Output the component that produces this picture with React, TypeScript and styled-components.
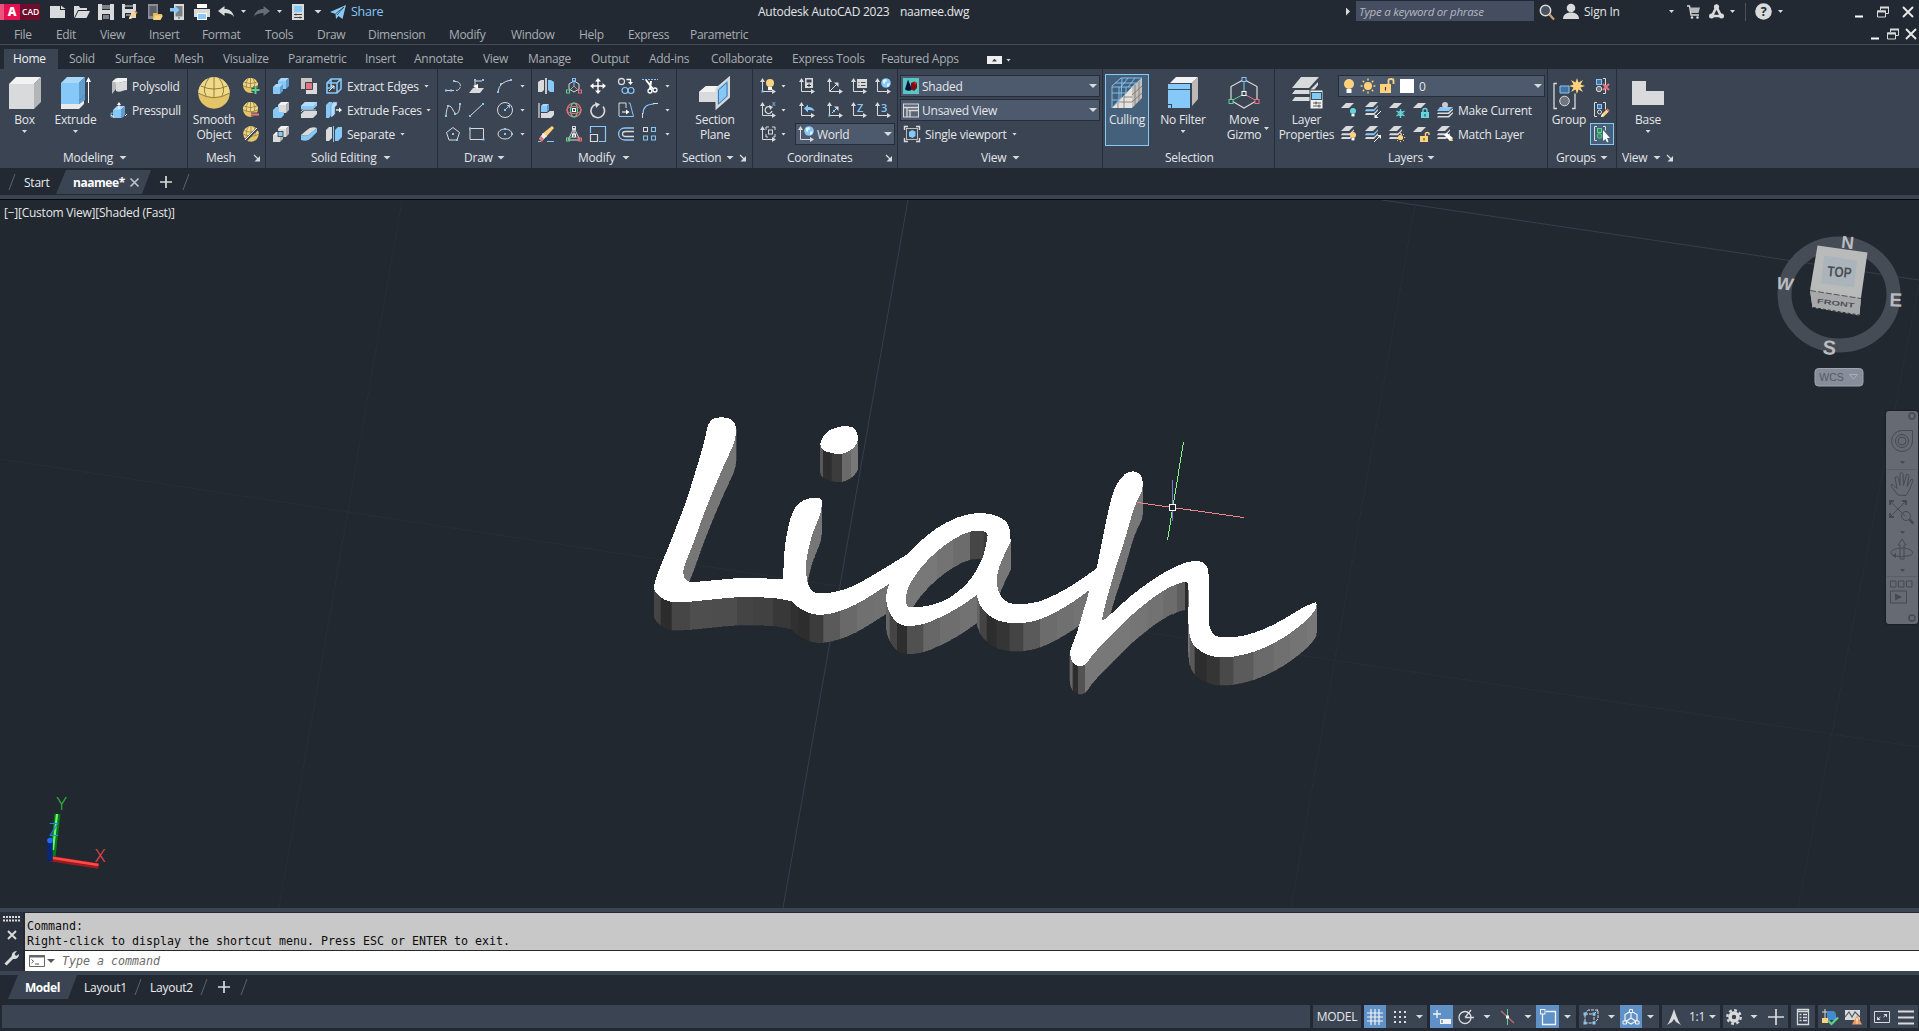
import React from 'react';
import styled, { createGlobalStyle } from 'styled-components';

const C = {
  dark: '#222932',
  view: '#212830',
  panel: '#3b4453',
  field: '#4d596c',
  edge: '#262d38',
  text: '#e4e6e9',
  dim: '#a9adb4',
  g: '#d9dadb',
  b: '#86c8f8',
  y: '#ffd27d',
  red: '#e8737a',
  green: '#5fd08e',
  teal: '#63d5dc',
  hot: '#5f90c6',
};

const Global = createGlobalStyle`
  * { box-sizing: border-box; }
  body { margin: 0; background: ${C.dark}; overflow: hidden; }
`;

const App_ = styled.div`
  width: 1919px;
  height: 1031px;
  display: flex;
  flex-direction: column;
  background: ${C.dark};
  color: ${C.text};
  font: 12px/15px 'Open Sans', 'Noto Sans', sans-serif;
  letter-spacing: -0.24px;
`;

const Svg = styled.svg<{ $s?: number; $h?: number }>`
  display: block;
  flex: none;
  width: ${(p) => p.$s ?? 16}px;
  height: ${(p) => p.$h ?? p.$s ?? 16}px;
  fill: none;
  overflow: visible;
`;

const Label = styled.span<{ $w?: number }>`
  display: block;
  flex: none;
  width: ${(p) => (p.$w ? `${p.$w}px` : 'auto')};
  white-space: nowrap;
`;

const Caret = styled.i<{ $s?: number; $ml?: number }>`
  display: block;
  flex: none;
  width: ${(p) => p.$s ?? 5}px;
  height: ${(p) => ((p.$s ?? 5) > 5 ? 4 : 3)}px;
  margin-left: ${(p) => p.$ml ?? 0}px;
  background: ${C.g};
  clip-path: polygon(0 0, 100% 0, 50% 100%);
`;

const Gap = styled.span<{ $w: number }>`
  flex: none;
  width: ${(p) => p.$w}px;
`;

/* ---------- icons ---------- */
const Ico = ({ s = 16, h, children }: { s?: number; h?: number; children: React.ReactNode }) => (
  <Svg $s={s} $h={h} viewBox={`0 0 ${s} ${h ?? s}`}>
    {children}
  </Svg>
);

const Cube = ({ x = 0, y = 0, w = 16, k = 4, front = C.g, top = '#f2f2f2', side = '#b4b5b7' }) => (
  <g>
    <path d={`M${x} ${y + k}h${w - k}v${w - k}h${k - w}z`} fill={front} />
    <path d={`M${x} ${y + k}l${k} ${-k}h${w - k}l${-k} ${k}z`} fill={top} />
    <path d={`M${x + w - k} ${y + k}l${k} ${-k}v${w - k}l${-k} ${k}z`} fill={side} />
  </g>
);
const Blue = (p: { x?: number; y?: number; w?: number; k?: number }) => (
  <Cube {...p} front={C.b} top="#a9d8fb" side="#5f9fd0" />
);

const Ball = ({ r = 8, cx = 8, cy = 8 }) => (
  <g>
    <circle cx={cx} cy={cy} r={r} fill="#e3c567" />
    <path d={`M${cx - r} ${cy}A${r} ${r} 0 0 1 ${cx + r} ${cy}Q${cx} ${cy + r * 0.55} ${cx - r} ${cy}`} fill="#f1d98a" />
    <path
      d={`M${cx - r} ${cy}q${r} ${r * 0.6} ${2 * r} 0M${cx - r * 0.85} ${cy - r * 0.45}q${r * 0.85} ${r * 0.4} ${r * 1.7} 0M${cx} ${cy - r}v${r * 1.25}M${cx - r * 0.3} ${cy - r}q${-r * 0.5} ${r * 0.7} ${-r * 0.2} ${r * 1.2}M${cx + r * 0.3} ${cy - r}q${r * 0.5} ${r * 0.7} ${r * 0.2} ${r * 1.2}`}
      stroke="#8a7434"
      strokeWidth={r > 9 ? 0.9 : 0.7}
    />
  </g>
);

const Sheet = ({ y = 1, x = 0, w = 13, c = C.g }) => (
  <path d={`M${x + 5} ${y}h${w - 5}l-5 5h${5 - w}z`} fill={c} />
);
const Stack = ({ c = C.g }: { c?: string }) => (
  <g>
    <Sheet y={0} />
    <path d="M1 7.2h8l4-4v1.6l-4 4.4H0z" fill={c} />
    <path d="M1 11h8l4-4v1.6l-4 4.4H0z" fill={C.g} />
  </g>
);
const Bulb = ({ x, y, r = 3, c = C.y }: { x: number; y: number; r?: number; c?: string }) => (
  <g>
    <circle cx={x} cy={y} r={r} fill={c} />
    <rect x={x - r / 2} y={y + r} width={r} height={r * 0.8} fill="#fff" />
  </g>
);
const Sun = ({ x, y, r = 3 }: { x: number; y: number; r?: number }) => (
  <g>
    <circle cx={x} cy={y} r={r} fill={C.y} />
    {[0, 45, 90, 135, 180, 225, 270, 315].map((a) => (
      <path key={a} d={`M${x + r * 1.35} ${y}h${r * 0.5}`} transform={`rotate(${a} ${x} ${y})`} stroke={C.y} strokeWidth={r * 0.35} />
    ))}
  </g>
);
const Lock = ({ x, y, c = C.y, open = false }: { x: number; y: number; c?: string; open?: boolean }) => (
  <g transform={`translate(${x} ${y})`}>
    <rect x="0" y="4" width="8" height="6" fill={c} />
    <path d={open ? 'M5.5 4V1.5q0-1 1.8-1t1.7 1V3' : 'M2 4V2q0-1.5 2-1.5T6 2v2'} stroke={c} strokeWidth="1.4" />
    <rect x="3.5" y="6" width="1" height="2.4" fill="#333" />
  </g>
);
const Pencil = ({ x, y }: { x: number; y: number }) => (
  <g transform={`translate(${x} ${y})`}>
    <path d="M0 8l1-3 4.5-4.5 2.2 2.2L3 7.2z" fill={C.y} />
    <path d="M5.5.5l1-1 2.2 2.2-1 1z" fill={C.red} />
    <path d="M0 8l1-3 2 2.2z" fill="#fff" />
  </g>
);
const Globe = ({ x = 11, y = 5 }) => (
  <g>
    <circle cx={x} cy={y} r="4.8" fill={C.b} />
    <path d={`M${x - 3} ${y - 3}l3-1 1 2-2 1v2l-2-1zM${x + 1} ${y + 1}l3-1-1 3-2 1z`} fill="#e6f4ff" />
  </g>
);
const Ucs = ({ children }: { children?: React.ReactNode }) => (
  <Ico>
    <path d="M2.5 2v11.5H14" stroke={C.g} />
    <path d="M0 4l2.5-4L5 4zM12 11l4 2.5-4 2.5z" fill={C.g} />
    {children}
  </Ico>
);

const dot = (x: number, y: number, c = C.b) => <rect key={`${x}-${y}`} x={x - 1} y={y - 1} width="2" height="2" fill={c} />;
const box = (x: number, y: number, w: number, c: string, f = 'none') => <rect x={x} y={y} width={w} height={w} stroke={c} fill={f} />;

const I = {
  fresh: <Ico><path d="M0 2h10v4h5v8H0z" fill={C.g} /><path d="M11 1.500l4.500 3.500H11z" fill={C.g} /></Ico>,
  open: <Ico><path d="M0 2h5l1 2h7v2H4L1 12 0 14z" fill={C.g} /><path d="M4.500 7H16l-3.500 7H1z" fill={C.g} /></Ico>,
  save: <Ico><path d="M0 0h16v16H0z" fill={C.g} /><path d="M4 0h8v6H4zM4 10h8v6H4z" fill={C.dark} /><path d="M4 2h8M4 4h8M5 12h6M5 14h6" stroke={C.g} strokeWidth="1.200" /></Ico>,
  saveAs: <Ico><path d="M0 0h14v14H0z" fill={C.g} /><path d="M3 0h8v5H3zM3 9h6v5H3z" fill={C.dark} /><path d="M3 2h8M4 11h5" stroke={C.g} /><Pencil x={7} y={7} /></Ico>,
  mobOpen: <Ico><path d="M1 0h10v15H1z" fill="#8b8f95" /><path d="M2.500 2h7v10h-7z" fill="#5a5f68" /><path d="M6 9h4l1 1h4v2h-6l-3 4z" fill="#e9b65c" /><path d="M8 11.500h8L13.500 16H6z" fill={C.y} /></Ico>,
  mobSave: <Ico><path d="M4 0h10v16H4z" fill={C.g} /><path d="M5.500 2h7v10.500h-7z" fill="#7b8087" /><path d="M0 4h5V1.500L9.500 6 5 10V7.500H0z" fill={C.b} /><path d="M8 14h2" stroke="#555" /></Ico>,
  print: <Ico><path d="M3 0h10v4H3z" fill="#fff" /><path d="M0 5h16v8H0z" fill={C.g} /><path d="M3 9h10v7H3z" fill="#fff" /><path d="M4 10h8v5H4z" fill={C.b} /></Ico>,
  undo: <Ico><path d="M0 7l6.500-5v3c5 0 8.500 2.500 9.500 8-2-3-5-4-9.500-4v3z" fill={C.g} /></Ico>,
  redo: <Ico><path d="M16 7L9.500 2v3C4.500 5 1 7.500 0 13c2-3 5-4 9.500-4v3z" fill="#676d76" /></Ico>,
  sheet: <Ico><path d="M2 0h12v16H2z" fill={C.g} /><path d="M4 2h8v6H4z" fill={C.b} /><path d="M4 10.500h8M4 13.500h8" stroke="#444" /><path d="M6 9.500v2M10 12.500v2" stroke="#444" /></Ico>,
  plane: <Ico><path d="M0 8L16 1l-3.500 14-4-3L6 15l-.5-5zM6 10l8-7-6.500 8" fill={C.b} /><path d="M5.500 9.800L14 3 7 11" stroke={C.dark} strokeWidth=".7" /></Ico>,
  search: <Ico><circle cx="6.500" cy="6.500" r="5.200" fill="#4a525e" stroke={C.g} strokeWidth="1.500" /><path d="M10.500 10.500l4.500 5" stroke="#c9a46a" strokeWidth="2.200" /></Ico>,
  user: <Ico><circle cx="8" cy="4" r="4.300" fill={C.g} /><path d="M0 15c0-4 3-6.500 8-6.500s8 2.500 8 6.500z" fill={C.g} /></Ico>,
  cart: <Ico s={13} h={14}><path d="M0 1h2.500L4 10h8" stroke={C.g} strokeWidth="1.400" /><path d="M3 2.500h10L11.500 8H4z" fill="#b5b7ba" /><circle cx="5" cy="12.500" r="1.300" fill={C.g} /><circle cx="10.500" cy="12.500" r="1.300" fill={C.g} /></Ico>,
  tri: <Ico s={15}><path d="M7.500 3L3 12h9z" stroke={C.g} strokeWidth="2.600" /><circle cx="7.500" cy="2.800" r="2.600" fill={C.g} /><circle cx="2.500" cy="12" r="2.500" fill={C.g} /><circle cx="12.500" cy="12" r="2.500" fill={C.g} /></Ico>,
  help: <Ico s={17}><circle cx="8.500" cy="8.500" r="8.300" fill={C.g} /><text x="8.500" y="13" textAnchor="middle" fontSize="12.500" fontWeight="700" fill={C.dark}>?</text></Ico>,
  min: <Ico s={12}><path d="M2 10.500h8" stroke="#fff" strokeWidth="2" /></Ico>,
  rest: <Ico s={12}><path d="M3.500 4V1.500h8v6H9" stroke={C.g} /><path d="M3 1.500h9" stroke={C.g} strokeWidth="2" /><path d="M.5 5h8v6h-8z" stroke={C.g} /><path d="M0 5.500h9" stroke={C.g} strokeWidth="2" /></Ico>,
  close: <Ico s={12}><path d="M1 1l10 10M11 1L1 11" stroke="#e8e8e8" strokeWidth="1.900" /></Ico>,

  box: <Ico s={32}><Cube w={32} k={7} /></Ico>,
  extrude: <Ico s={32}><path d="M1 27h18l5-4v4l-5 5H1z" fill="#e9e9e9" /><Blue x={1} w={24} k={6} /><path d="M1 24h18v3H1z" fill={C.b} /><path d="M19 24l6-6v5l-6 4z" fill="#5f9fd0" /><path d="M28.500 26V3" stroke="#fff" /><path d="M26 5l2.500-5L31 5z" fill="#fff" /></Ico>,
  polysolid: <Ico><path d="M1 4l4-4v11l-4 5z" fill="#b8b9bb" /><path d="M5 4c4 2 6-1 11-1v9c-4 0-7 3-11 1z" fill={C.g} /><path d="M1 3.500L6 0h10v3C11 3 9 6 5 4.500z" fill="#f2f2f2" /></Ico>,
  presspull: <Ico><path d="M0 11h14l-2 4H0z" stroke={C.b} strokeWidth=".8" /><Blue x={2} y={4} w={12} k={4} /><path d="M8 7V2" stroke="#fff" /><path d="M6 3l2-3 2 3z" fill="#fff" /><path d="M0 13l3 2M16 12l-2 2" stroke="#fff" /></Ico>,
  smooth: <Ico s={32}><Ball r={15.700} cx={16} cy={16} /></Ico>,
  meshMore: <Ico><Ball r={7.500} cx={7.500} cy={7.500} /><path d="M12.500 8v8M8.500 12h8" stroke={C.panel} strokeWidth="4" /><path d="M12.500 8v8M8.500 12h8" stroke={C.green} strokeWidth="2" /></Ico>,
  meshLess: <Ico><Ball r={7.500} cx={7.500} cy={7.500} /><path d="M8 12.500h8" stroke={C.panel} strokeWidth="4" /><path d="M8 12.500h8" stroke={C.red} strokeWidth="2.200" /></Ico>,
  meshRef: <Ico><Ball r={7.700} /><path d="M2 15L15 2" stroke={C.panel} strokeWidth="3" /><path d="M2 14L14 2" stroke="#eee" /></Ico>,

  union: <Ico><Blue x={5} y={0} w={11} k={3} /><Blue x={0} y={6} w={10} k={3} /></Ico>,
  subtract: <Ico><Cube x={5} y={0} w={11} k={3} /><path d="M0 8l3-3h3v5h5v3l-3 3H0z" fill={C.b} /></Ico>,
  intersect: <Ico><Cube x={5} y={0} w={11} k={3} /><Cube x={0} y={6} w={10} k={3} /><rect x="5" y="5.500" width="5" height="5" fill={C.b} stroke="#333" strokeWidth=".8" /></Ico>,
  interfere: <Ico><path d="M0 0h11v11H0z" fill="#c9c5c4" /><path d="M5 5h11v11H5z" fill={C.g} /><path d="M4.500 4.500h7v7h-7z" fill={C.red} stroke={C.panel} /></Ico>,
  slice: <Ico><path d="M0 4l4-4h12v3.500L12 7.500H0z" fill={C.b} /><path d="M0 4l4-4h12l-4 4z" fill="#b5defc" /><path d="M0 12l3-3h13v3l-4 4H0z" fill={C.g} /><path d="M0 10l2-2h13" stroke="#fff" strokeWidth=".7" /></Ico>,
  thicken: <Ico><path d="M0 9l6-5q4-4 10-2l-6 5q-3 4-10 2z" fill={C.g} /><path d="M0 9q7 2 10-2l6-5v4l-6 6Q7 16 0 14z" fill={C.b} /></Ico>,
  xEdges: <Ico><path d="M1 5l4-4h10v10l-4 4H1zM1 5h10v10M11 5l4-4M5 1v9H1" stroke={C.b} strokeWidth="1.600" /><path d="M3 13l5-5M5 8h3v3" stroke="#fff" /></Ico>,
  xFaces: <Ico><path d="M0 3l3-3h3v12l-3 4H0z" fill={C.b} /><path d="M5 3l2-3h4v3L9 5v7l-3 3H5z" fill="#b5defc" stroke="#55799b" strokeWidth=".5" /><path d="M10 8h4" stroke="#fff" strokeWidth="1.300" /><path d="M13 5.500L16 8l-3 2.500z" fill="#fff" /></Ico>,
  separate: <Ico><path d="M0 4l3-3h3v11l-3 3H0z" fill={C.g} /><path d="M7.500 0v16" stroke={C.b} /><path d="M9 4l3-3h4v10l-4 4H9z" fill={C.b} /></Ico>,

  pline: <Ico><path d="M1 12.500h9M10 3.500c8 0 6 9 1 9" stroke={C.g} strokeDasharray="8 1" />{dot(1, 12.500)}{dot(6, 12.500)}{dot(9, 3)}</Ico>,
  helix: <Ico><path d="M0 15l4-5h11l-4 5z" fill={C.g} /><path d="M6 12V3h7" stroke={C.g} /><path d="M4 8l5-2v5z" fill="#fff" />{dot(6, 2)}{dot(14, 2)}</Ico>,
  arc: <Ico><path d="M1 14Q2 4 14 2" stroke={C.g} />{dot(1, 14)}{dot(4, 6)}{dot(14, 2)}</Ico>,
  spline: <Ico><path d="M1 13C2 2 5 2 8 8s6 5 7-5" stroke={C.g} />{dot(1, 14)}{dot(3, 4)}{dot(10, 12)}{dot(15, 2)}</Ico>,
  line: <Ico><path d="M1 14L14 2" stroke={C.g} />{dot(1, 14)}{dot(14, 2)}</Ico>,
  circle: <Ico><circle cx="8" cy="8" r="7.500" stroke={C.g} /><path d="M8 8l4-4" stroke={C.b} /><path d="M9.500 3H13v3.500z" fill={C.b} />{dot(8, 8)}</Ico>,
  polygon: <Ico><path d="M8 1.500l6.500 5L12 14H4L1.500 6.500z" stroke={C.g} />{dot(8, 8)}{dot(12, 14)}</Ico>,
  rect: <Ico><path d="M1 2.500h13.500v11H1z" stroke={C.g} />{dot(1, 2.500)}{dot(14.500, 13.500)}</Ico>,
  ellipse: <Ico><ellipse cx="8" cy="8" rx="7" ry="5" stroke={C.g} />{dot(8, 8)}{dot(8, 3)}{dot(15, 8)}</Ico>,

  mirror3: <Ico><path d="M0 4l3-2h3v10l-2 2H0z" fill={C.g} /><path d="M8 0v16" stroke="#fff" strokeWidth="1.400" /><path d="M10 2h3l3 2v10h-4l-2-2z" fill={C.b} /></Ico>,
  gizMove: <Ico><path d="M8 3l5 3v5l-5 3-5-3V6z" stroke={C.g} /><path d="M8 8V2" stroke={C.b} /><path d="M8 8l-5 5" stroke={C.green} /><path d="M8 8l5 5" stroke={C.red} />{box(6.500, .5, 3, C.b)}{box(.5, 12, 3, C.green)}{box(12.500, 12, 3, C.red)}</Ico>,
  move: <Ico><path d="M8 2v12M2 8h12" stroke="#fff" strokeWidth="1.400" /><path d="M5 3.500L8 0l3 3.500zM5 12.500L8 16l3-3.500zM3.500 5L0 8l3.500 3zM12.500 5L16 8l-3.500 3z" fill="#fff" /></Ico>,
  copy: <Ico><circle cx="3.500" cy="3.500" r="3" stroke={C.g} strokeWidth="1.300" /><circle cx="7" cy="12.500" r="3" stroke={C.b} strokeWidth="1.200" /><circle cx="13" cy="12.500" r="3" stroke={C.b} strokeWidth="1.200" /><path d="M8.500 1.500h4V5" stroke="#fff" strokeWidth="1.300" /><path d="M10 4h5l-2.500 3z" fill="#fff" /></Ico>,
  trim: <Ico><path d="M0 1.500h16" stroke={C.b} strokeDasharray="2 1" /><path d="M4 2l7 9M9 3L8 11" stroke="#fff" strokeWidth="2" /><circle cx="8" cy="13" r="2" stroke="#fff" strokeWidth="1.300" /><circle cx="13" cy="12" r="2" stroke="#fff" strokeWidth="1.300" /></Ico>,
  align3: <Ico><path d="M1 1v15" stroke="#fff" /><Blue x={3} y={2} w={8} k={2} /><path d="M3 11h6l3-2h4v4l-3 3H3z" fill={C.g} /></Ico>,
  gizRot: <Ico><circle cx="8" cy="8" r="7" stroke={C.red} strokeWidth="1.200" /><ellipse cx="8" cy="8" rx="3.500" ry="7" stroke={C.green} strokeWidth="1.200" /><ellipse cx="8" cy="8" rx="7" ry="3.500" stroke={C.red} /><rect x="6.500" y="6.500" width="3" height="3" stroke="#fff" /></Ico>,
  rotate: <Ico><path d="M13 4.500A6.800 6.800 0 1 1 6 2.300" stroke={C.g} strokeWidth="1.600" /><path d="M5 0l5 2.300L6 6z" fill={C.g} /></Ico>,
  stretch: <Ico><path d="M1 14V1h7v5" stroke={C.g} /><path d="M1 14.500h14.500L12 1h-1.500" stroke={C.b} /><path d="M4 10h6" stroke="#fff" /><path d="M8 7.500l3.500 2.500L8 12.500z" fill="#fff" /></Ico>,
  fillet: <Ico><path d="M1 12Q1 2 12 2" stroke={C.b} strokeWidth="1.200" /><path d="M.5 11v5M11 1.500h5" stroke={C.g} /></Ico>,
  erase: <Ico><path d="M14 0l2 2-8 9-4-3z" fill={C.y} /><path d="M5 7l4 3-4 4-4-1z" fill="#f0f0f0" /><path d="M3 10l3 3-2 3-3-3z" fill={C.red} /><path d="M0 15.500h3M9 15.500h7" stroke={C.b} /></Ico>,
  gizScale: <Ico><path d="M8 2L2 14h12z" stroke={C.g} /><path d="M8 10V2" stroke="#fff" /><path d="M8 9l-6 5" stroke={C.green} /><path d="M8 9l6 5" stroke={C.red} />{box(6.500, .5, 3, C.g)}{box(.5, 12, 3, C.green)}{box(12.500, 12, 3, C.red)}{box(6.500, 8, 3, '#fff')}</Ico>,
  scale: <Ico><path d="M.5 7V.5h15v15H9" stroke={C.b} strokeWidth="1.200" /><path d="M.5 8.500h7v7h-7z" stroke={C.g} strokeWidth="1.200" /></Ico>,
  offset: <Ico><path d="M16 2H7C-1.500 2-1.500 14 7 14h9" stroke={C.b} strokeWidth="1.300" /><path d="M16 5.500H7.500c-4 0-4 5 0 5H16" stroke={C.g} strokeWidth="1.300" /></Ico>,
  array: <Ico>{box(1.500, 1.500, 4, C.g)}{box(9.500, 1.500, 4, C.b)}{box(1.500, 10, 4, C.b)}{box(9.500, 10, 4, C.b)}</Ico>,

  section: <Ico s={32}><path d="M0 15l7-6h13v15l-3 1H0z" fill={C.g} /><path d="M0 15l7-6h13l-4 6z" fill="#f2f2f2" /><path d="M17.500 11.500L30 1v19L17.500 31z" fill={C.b} stroke={C.g} strokeWidth="2" /><path d="M19.500 13L28 5.500V19l-8.500 8z" stroke="#44617d" strokeWidth=".8" /></Ico>,

  ucsLight: <Ucs><Bulb x={10} y={5} r={4} />{dot(2.500, 13.500)}</Ucs>,
  ucsRot: <Ucs><path d="M11 5.500A3.500 3.500 0 1 0 12 9" stroke={C.g} strokeWidth="1.200" /><path d="M9 3l4 2-3 3z" fill={C.g} /><text x="12" y="4" fontSize="7" fill={C.b}>x</text></Ucs>,
  ucsObj: <Ucs><path d="M6 4V1h3M12 1h3v3M6 8v3h2M15 8v3h-2" stroke={C.g} />{box(8.500, 4, 4, C.g)}</Ucs>,
  ucs1: <Ucs><path d="M6 0h8v10H6z" fill={C.g} /><path d="M7.500 1.500h5v3h-5z" fill={C.panel} /><path d="M8 7.500h4M10 5.500v3.500" stroke="#333" /></Ucs>,
  ucs2: <Ucs><path d="M3 13l7-7" stroke={C.g} /><path d="M7 4.500h4.500V9z" fill={C.g} /></Ucs>,
  ucs3: <Ucs><path d="M6 1h10v9H6z" fill={C.g} /><path d="M7.500 4.500h1M10 4.500h4.500M7.500 7.500h1M10 7.500h4.500" stroke="#444" /></Ucs>,
  ucs4: <Ucs><Globe /></Ucs>,
  ucs5: <Ucs><path d="M5 6.500l4-4v2.500c4 0 5 1 6.500 4C13 8 12 8 9 8v2.500z" fill={C.b} /></Ucs>,
  ucs6: <Ucs><path d="M5 11l5-5" stroke={C.g} /><path d="M7 4.500h4.500V9z" fill={C.g} />{dot(2.500, 13.500)}{dot(7, 9)}</Ucs>,
  ucs7: <Ucs><text x="6" y="10" fontSize="11" fontWeight="600" fill={C.b}>Z</text></Ucs>,
  ucs8: <Ucs><text x="6" y="10" fontSize="11" fontWeight="600" fill={C.b}>3</text></Ucs>,

  shaded: <Ico><rect width="16" height="16" fill="#58c6c4" /><path d="M5 1.500l4 10q-3 2.500-7 0z" fill="#0b1038" /><path d="M8 5l3.500-1.500L14 5v5l-3 3-3-2z" fill="#7d0d12" /><path d="M11 3.500l3 1.500-2 2z" fill="#e02a2a" /></Ico>,
  unsaved: <Ico><rect x=".5" y="2" width="15" height="13" stroke={C.g} fill="#5c6575" /><path d="M.5 5.500h15M5.500 8.500H16M4 5.500V15M7 9v6" stroke={C.g} strokeWidth="1.300" /></Ico>,
  single: <Ico><path d="M.5 4V.5H4M12 .5h3.500V4M15.500 12v3.500H12M4 15.500H.5V12" stroke={C.g} strokeWidth="1.400" /><rect x="2.500" y="2.500" width="11" height="11" stroke={C.g} strokeWidth=".8" /><path d="M5 6l3-2 3.500 1.500v4.500L8.500 12 5 10.500z" fill={C.b} /></Ico>,

  culling: <Ico s={32}><path d="M1 31l20-21v21z" fill="#e6e3df" /><path d="M21 10L31 1v20L21 31z" fill="#c4c0bc" /><path d="M13 18v13M7 24v7M13 20h8M8 25h13M24 8v20M28 4v21M21 18l10-9M21 25l10-9" stroke="#75716e" strokeWidth=".8" /><path d="M1 31V9l9-8h21L21 10H1M11 1l-1 20M1 16h15M1 23h8M8 10v14M15 10v7M4 6h21M10 10l7-9M17 10l7-9M1 31l9-10" stroke={C.b} strokeWidth=".9" /></Ico>,
  nofilter: <Ico s={32}><path d="M3 6l6-6h22l-6 6z" fill="#f2f2f2" /><path d="M25 6l6-6v22l-6 7z" fill="#bcbab7" /><path d="M1 7h22v5H1zM1 13h22v18H1z" fill={C.b} /><path d="M1 12.500h22" stroke="#34506b" /><rect x=".5" y="27.500" width="4" height="4" fill={C.b} stroke={C.panel} /></Ico>,
  gizmo: <Ico s={32}><path d="M16 2.500L29 9.500v14L16 31 3 23.500v-14z" stroke={C.g} strokeWidth="1.200" /><path d="M16 17V3" stroke={C.b} /><path d="M16 17L3 24" stroke={C.green} /><path d="M16 17l13 7" stroke={C.red} />{box(14, .5, 4, C.b, C.panel)}{box(1, 22.500, 4, C.green, C.panel)}{box(27, 22.500, 4, C.red, C.panel)}{box(14, 14.500, 4, '#fff', C.panel)}</Ico>,
  layers: <Ico s={32}><path d="M10 0h18L18 11H1z" fill={C.g} /><path d="M4 13h15l8-8v3l-7 9H1zM4 20h15v4H1z" fill={C.g} /><rect x="19" y="13" width="13" height="19" fill="#f0f0f0" stroke={C.panel} /><rect x="20.500" y="15.500" width="10" height="7" fill={C.b} stroke="#355" /><path d="M22 26h8M22 29h8M25 24.500v3M28 27.500v3" stroke="#444" strokeWidth=".9" /></Ico>,
  bulb: <Ico><Bulb x={8} y={6} r={5} /></Ico>,
  sun: <Ico><Sun x={8} y={8} r={4} /></Ico>,
  unlock: <Ico><path d="M1 6h11v9H1z" fill={C.y} /><path d="M9.500 6V2.500Q9.500 1 12 1t2.500 1.500V6" stroke={C.y} strokeWidth="1.800" /><path d="M6.500 9v3.500" stroke="#444" strokeWidth="1.200" /></Ico>,
  la1: <Ico><Sheet /><Bulb x={12} y={9} c={C.teal} /></Ico>,
  la2: <Ico><Stack c={C.b} /><path d="M16 9l-5 5" stroke="#fff" /><path d="M9.500 12v4h4z" fill="#fff" /></Ico>,
  la3: <Ico><Sheet /><path d="M11.500 7v9M7.500 9l8 5M15.500 9l-8 5" stroke={C.teal} strokeWidth="1.300" /><circle cx="11.500" cy="11.500" r="2.400" stroke={C.teal} /></Ico>,
  la4: <Ico><Sheet /><Lock x={8} y={6} c={C.teal} /></Ico>,
  la5: <Ico><path d="M3 5h13l-4 4H0z" fill={C.b} /><path d="M1 10.500h10l5-4v1.500l-4 4H0zM1 14h10l5-4v1.500l-4 4H0z" fill={C.g} /><circle cx="8" cy="3" r="3" fill="#c9cacc" /></Ico>,
  lb1: <Ico><Stack /><Bulb x={12} y={9} /></Ico>,
  lb2: <Ico><Stack c={C.b} /><path d="M9 16l5-5" stroke="#fff" /><path d="M12 9h4v4z" fill="#fff" /></Ico>,
  lb3: <Ico><Stack /><Sun x={11.500} y={11.500} r={2.600} /></Ico>,
  lb4: <Ico><Sheet /><Lock x={7} y={6} open /></Ico>,
  lb5: <Ico><Stack /><path d="M7 9l3-2 6 5-3 3z" fill="#fff" /><path d="M12 15l3-3 1 3z" fill={C.y} /></Ico>,

  group: <Ico s={32}><path d="M4 6.500H1v25h3M19 31.500h3v-15" stroke={C.g} strokeWidth="1.300" /><path d="M7 9h9v7H7z" fill="#46739d" stroke={C.b} /><circle cx="11.500" cy="24" r="4.800" fill="#70757e" stroke={C.g} /><path d="M24 1l1.500 4.500L30 3l-2.500 4.500L32 9l-4.500 1.500L30 15l-4.500-2.500L24 17l-1.500-4.500L18 15l2.500-4.500L16 9l4.500-1.500L18 3l4.500 2.500z" fill={C.y} /></Ico>,
  ungroup: <Ico>{box(2.500, 1.500, 5, C.b, '#46739d')}<circle cx="5" cy="11" r="2.700" fill="#70757e" stroke={C.g} /><path d="M9 .5h2.500v15H9" stroke={C.g} /><path d="M9 6l6 6M15 6l-6 6" stroke={C.red} strokeWidth="2" /></Ico>,
  groupEdit: <Ico><path d="M3 .5H.5v14H3M9 .5h2.500v7" stroke={C.g} />{box(3.500, 2.500, 4, C.b, '#46739d')}<circle cx="5.500" cy="10" r="2" stroke={C.g} /><Pencil x={7} y={7} /></Ico>,
  groupSel: <Ico><path d="M3 .5H.5v14H3M9 .5h2.500v4" stroke={C.g} />{box(3.500, 2.500, 4, C.green, '#3b8560')}<circle cx="5.500" cy="10" r="2.300" fill="#3b8560" stroke={C.green} /><path d="M9 4v11l2.500-2 1.500 3.500 1.500-1-1.500-3.500h3z" fill="#fff" /></Ico>,
  base: <Ico s={32}><path d="M0 4h14v10h18v14H0z" fill={C.g} /></Ico>,
  launch: <Ico s={8}><path d="M1 1l5 5" stroke={C.g} strokeWidth="1.200" /><path d="M7 2v5.500H1.500z" fill={C.g} /></Ico>,
  x9: <Ico s={9}><path d="M.5.500l8 8M8.500.500l-8 8" stroke="#bfc3c9" strokeWidth="1.700" /></Ico>,
  plus: <Ico s={12}><path d="M6 0v12M0 6h12" stroke={C.g} strokeWidth="1.700" /></Ico>,
};

/* ---------- title, menu and ribbon tabs ---------- */
const TitleBar = styled.header`
  flex: none;
  height: 23px;
  display: flex;
  align-items: center;
`;
const Quick = styled.div<{ $x: number }>`
  display: flex;
  flex: none;
  width: ${(p) => p.$x}px;
  align-items: center;
`;
const Badge = styled.div`
  display: flex;
  flex: none;
  width: 40px;
  height: 16px;
  margin-right: 10px;
  align-items: center;
  background: linear-gradient(90deg, #e8547f 0 4px, #e51050 4px 20px, #6d0f2c 20px);
  color: #fff;
  font-size: 8.5px;
  font-weight: 600;
  letter-spacing: 0;
  b {
    width: 16px;
    margin-left: 4px;
    margin-right: 2px;
    text-align: center;
    font-size: 12px;
  }
`;
const Share = styled(Label)`
  margin-left: 5px;
  color: ${C.b};
  font-size: 12.5px;
`;
const Search = styled.div`
  flex: none;
  width: 178px;
  height: 20px;
  margin: -2px 5px 0 6px;
  padding: 3px 3px;
  background: #454d60;
  color: #b4b8c0;
  font-style: italic;
  font-size: 11.5px;
`;
const Side = styled.i`
  width: 4px;
  height: 8px;
  flex: none;
  background: ${C.g};
  clip-path: polygon(0 0, 100% 50%, 0 100%);
`;
const Rule = styled.span`
  width: 1px;
  height: 18px;
  background: #4b525d;
`;
const MenuBar = styled.nav`
  flex: none;
  height: 22px;
  display: flex;
  align-items: center;
  gap: 24px;
  padding: 1px 2px 0 14px;
  border-bottom: 1px solid #434b57;
  color: ${C.dim};
  letter-spacing: -0.32px;
`;
const WinKeys = styled.div`
  display: flex;
  flex: 1;
  justify-content: flex-end;
  align-items: center;
  gap: 6px;
`;
const RibbonTabs = styled.nav`
  flex: none;
  height: 24px;
  display: flex;
  align-items: flex-end;
  padding-left: 4px;
  color: ${C.dim};
  letter-spacing: -0.28px;
`;
const RTab = styled.div<{ $w: number; $on?: boolean }>`
  flex: none;
  width: ${(p) => p.$w + 20}px;
  height: 20px;
  padding: 2px 0 0 ${(p) => (p.$on ? 9 : 11)}px;
  white-space: nowrap;
  color: ${(p) => (p.$on ? '#f2f3f4' : C.dim)};
  background: ${(p) => (p.$on ? C.panel : 'transparent')};
`;
const Mini = styled.div`
  align-self: flex-start;
  display: flex;
  justify-content: center;
  align-items: center;
  width: 15px;
  height: 8px;
  margin: 11px 4px 0 21px;
  background: #eee;
  i {
    width: 5px;
    height: 3px;
    background: #444;
    clip-path: polygon(0 100%, 100% 100%, 50% 0);
  }
`;
const TabCaret = styled(Caret)`
  align-self: center;
  margin-top: 6px;
`;

/* ---------- ribbon ---------- */
const Ribbon = styled.section`
  flex: none;
  height: 99px;
  display: flex;
  padding-left: 1px;
  background: ${C.panel};
`;
const PanelBox = styled.div<{ $w: number }>`
  flex: none;
  width: ${(p) => p.$w}px;
  display: flex;
  flex-direction: column;
  border-right: 1px solid ${C.edge};
  &:last-child { border-right: 0; }
`;
const Body = styled.div`
  height: 78px;
  display: flex;
  padding-top: 5px;
`;
const Grid = styled.div<{ $cols: string; $pad?: number }>`
  display: grid;
  width: 100%;
  grid-template-columns: ${(p) => p.$cols};
  grid-auto-rows: 24px;
  align-content: start;
  align-items: center;
  padding-left: ${(p) => p.$pad ?? 0}px;
`;
const PTitle = styled.div<{ $x: number }>`
  display: flex;
  align-items: center;
  height: 21px;
  padding-left: ${(p) => p.$x}px;
`;
const Cmd = styled.div<{ $pad?: number; $gap?: number }>`
  display: flex;
  align-items: center;
  height: 24px;
  gap: ${(p) => p.$gap ?? 5}px;
  padding-left: ${(p) => p.$pad ?? 0}px;
`;
const BigBtn = styled.div<{ $w: number; $on?: boolean }>`
  grid-row: 1 / span 3;
  align-self: start;
  flex: none;
  display: flex;
  flex-direction: column;
  align-items: center;
  width: ${(p) => p.$w}px;
  height: 72px;
  padding-top: ${(p) => (p.$on ? 2 : 3)}px;
  border: ${(p) => (p.$on ? `1px solid ${C.b}` : 0)};
  background: ${(p) => (p.$on ? '#45607a' : 'transparent')};
  text-align: center;
  white-space: pre;
  span { margin-top: 3px; }
  i { margin-top: 3px; }
`;
const Combo = styled.div<{ $w: number; $ml?: number }>`
  flex: none;
  width: ${(p) => p.$w}px;
  height: 22px;
  margin: 1px 0 1px ${(p) => p.$ml ?? 0}px;
  display: flex;
  align-items: center;
  gap: 3px;
  padding: 0 2px;
  border: 1px solid ${C.edge};
  background: ${C.field};
  > i { margin-left: auto; }
`;
const Stackd = styled.div<{ $pad?: number }>`
  display: flex;
  flex-direction: column;
  padding-left: ${(p) => p.$pad ?? 0}px;
`;
const Swatch = styled.span`
  width: 14px;
  height: 14px;
  margin: 0 2px;
  background: #fff;
`;
const GizCaret = styled.div`
  padding-top: 53px;
  margin-left: -4px;
`;
const Toggle = styled.div<{ $on?: boolean }>`
  display: flex;
  align-items: center;
  justify-content: center;
  width: 24px;
  height: 22px;
  border: ${(p) => (p.$on ? `1px solid ${C.b}` : 0)};
  background: ${(p) => (p.$on ? '#45607a' : 'transparent')};
`;
const WideCell = styled.div`
  grid-column: 2 / span 4;
`;

const Big = ({ w, icon, label, drop, on }: { w: number; icon: React.ReactNode; label: string; drop?: boolean; on?: boolean }) => (
  <BigBtn $w={w} $on={on}>
    {icon}
    <span>{label}</span>
    {drop && <Caret />}
  </BigBtn>
);
const Panel = ({ w, x, title, tw, drop = true, launch, children }: { w: number; x: number; title: string; tw: number; drop?: boolean; launch?: number; children: React.ReactNode }) => (
  <PanelBox $w={w}>
    <Body>{children}</Body>
    <PTitle $x={x}>
      <Label $w={tw}>{title}</Label>
      {drop && <Caret $s={8} $ml={6} />}
      {launch !== undefined && <><Gap $w={launch} />{I.launch}</>}
    </PTitle>
  </PanelBox>
);
const Drop = ({ icon, label, w, ml = 2 }: { icon: React.ReactNode; label?: string; w?: number; ml?: number }) => (
  <Cmd>
    {icon}
    {label && <Label $w={w}>{label}</Label>}
    <Caret $ml={ml} />
  </Cmd>
);

/* ---------- document tabs ---------- */
const DocTabs = styled.nav<{ $h: number; $top: number; $x: number }>`
  flex: none;
  height: ${(p) => p.$h}px;
  padding: ${(p) => p.$top}px 0 0 ${(p) => p.$x}px;
  display: flex;
  align-items: flex-start;
  color: #eceef0;
  > * { height: 24px; display: flex; align-items: center; }
`;
const SlashBox = styled.span`
  width: 8px;
  flex: none;
`;
const Slash = () => (
  <SlashBox><Ico s={8} h={16}><path d="M1 16L7 0" stroke="#5b626d" /></Ico></SlashBox>
);
const OnTab = styled.div<{ $w: number; $pad: number }>`
  flex: none;
  width: ${(p) => p.$w}px;
  padding-left: ${(p) => p.$pad}px;
  gap: 9px;
  background: ${C.panel};
  clip-path: polygon(10px 0, 100% 0, calc(100% - 9px) 100%, 0 100%);
  color: #fff;
  font-weight: 700;
  letter-spacing: -0.45px;
`;
const Strip = styled.div<{ $black?: boolean }>`
  flex: none;
  height: ${(p) => (p.$black ? 5 : 4)}px;
  background: ${C.panel};
  border-bottom: ${(p) => (p.$black ? '1px solid #05070a' : 0)};
`;

/* ---------- viewport ---------- */
const Viewport = styled.main`
  position: relative;
  flex: none;
  height: 708px;
  background: ${C.view};
  overflow: hidden;
`;
const Scene = styled.svg`
  display: block;
  width: 1919px;
  height: 708px;
`;
const ViewLabel = styled.div`
  position: absolute;
  left: 4px;
  top: 5px;
  color: #e6e6e6;
  white-space: nowrap;
`;
const NavBar = styled.div`
  position: absolute;
  left: 1886px;
  top: 211px;
  width: 32px;
  height: 213px;
  border-radius: 3px;
  background: #666a72;
  box-shadow: 0 0 2px #111;
`;

type Pt = [number, number];
const outline: Pt[][] = [
  [[280, 82], [303, 88], [316, 105], [318, 130], [310, 165], [290, 208], [268, 258], [240, 325], [215, 390], [190, 460], [170, 510], [160, 543], [165, 566], [182, 577]],
  [[182, 577], [250, 571], [330, 564], [400, 565], [460, 568]],
  [[460, 568], [461, 520], [466, 460], [475, 410], [488, 367], [505, 342], [530, 327], [568, 323], [576, 335]],
  [[576, 335], [572, 368], [560, 400], [545, 440], [533, 490], [528, 530], [532, 575], [542, 598], [556, 609]],
  [[556, 609], [600, 608], [650, 596], [700, 572], [750, 543], [800, 512], [835, 490], [870, 455], [920, 415], [980, 383], [1035, 370], [1065, 370], [1095, 376], [1122, 390], [1138, 412], [1142, 455]],
  [[1142, 455], [1125, 490], [1110, 525], [1102, 555], [1102, 590], [1113, 618], [1135, 638], [1175, 642], [1225, 635], [1280, 612], [1340, 577], [1400, 535]],
  [[1400, 535], [1406, 505], [1415, 460], [1427, 400], [1438, 350], [1448, 313], [1462, 280], [1484, 253], [1510, 244], [1530, 253], [1538, 275], [1535, 305], [1519, 338], [1505, 377], [1490, 430], [1474, 482], [1455, 540], [1435, 610], [1418, 675], [1418, 693]],
  [[1418, 693], [1445, 670], [1500, 620], [1560, 575], [1620, 538], [1670, 517], [1705, 513], [1728, 525], [1736, 555], [1736, 620], [1737, 690], [1742, 720], [1758, 738], [1790, 742], [1840, 737], [1900, 718], [1960, 688], [2020, 652], [2058, 636]],
  [[2058, 636], [2058, 655], [2030, 690], [1980, 730], [1930, 760], [1870, 786], [1810, 800], [1770, 802], [1730, 793], [1695, 770], [1680, 740], [1675, 690], [1676, 630], [1675, 580]],
  [[1675, 580], [1665, 576], [1640, 583], [1600, 602], [1550, 638], [1500, 680], [1450, 730], [1410, 770], [1380, 805], [1365, 825], [1345, 828], [1328, 818], [1320, 790], [1325, 770], [1340, 730], [1355, 680], [1370, 630], [1378, 600]],
  [[1378, 600], [1330, 635], [1280, 665], [1230, 688], [1180, 699], [1140, 699], [1100, 690], [1070, 670], [1050, 645], [1040, 615]],
  [[1040, 615], [990, 650], [930, 682], [880, 702], [830, 708], [802, 698], [780, 670], [769, 635], [770, 608], [777, 582]],
  [[777, 582], [730, 612], [680, 642], [630, 663], [580, 674], [540, 670], [505, 652], [483, 633]],
  [[483, 633], [430, 624], [370, 622], [320, 622], [250, 628], [180, 635], [125, 636], [92, 622], [73, 598], [78, 565], [95, 520], [120, 460], [145, 395], [170, 330], [190, 265], [210, 200], [225, 145], [233, 108], [250, 86], [280, 82]],
];
const hole: Pt[][] = [
  [[1073, 436], [1062, 424], [1020, 425], [970, 448], [920, 485], [880, 525], [850, 565], [832, 600], [828, 630], [835, 650], [870, 651], [910, 643], [950, 628], [990, 600], [1025, 563], [1050, 520], [1065, 480], [1073, 436]],
];
const tittle: Pt[][] = [
  [[640, 108], [670, 113], [684, 138], [680, 162], [662, 180], [635, 192], [605, 189], [580, 180], [571, 162], [578, 142], [600, 120], [640, 108]],
];

/* Catmull-Rom between corner points, two steps per control span */
const smooth = (runs: Pt[][]): Pt[] => {
  const out: Pt[] = [];
  for (const run of runs) {
    for (let i = 0; i < run.length - 1; i++) {
      const a = run[Math.max(0, i - 1)], b = run[i], c = run[i + 1], d = run[Math.min(run.length - 1, i + 2)];
      for (const t of [0, 0.5]) {
        const f = (k: 0 | 1) =>
          0.5 * (2 * b[k] + (c[k] - a[k]) * t + (2 * a[k] - 5 * b[k] + 4 * c[k] - d[k]) * t * t + (3 * b[k] - a[k] - 3 * c[k] + d[k]) * t * t * t);
        out.push([f(0), f(1)]);
      }
    }
  }
  return out;
};
const ramp: Pt[] = [[-30, 118], [45, 120], [65, 108], [80, 86], [90, 68], [97, 58], [112, 44], [130, 46], [150, 84], [180, 125], [210, 125]];
const shade = (deg: number) => {
  for (let i = 1; i < ramp.length; i++)
    if (deg <= ramp[i][0]) {
      const [a, va] = ramp[i - 1], [b, vb] = ramp[i];
      return Math.round(va + ((vb - va) * (Math.max(deg, a) - a)) / (b - a));
    }
  return 120;
};
const DEPTH = 84;
const solids = [outline, hole, tittle].map(smooth);
const walls = solids
  .flatMap((pts) =>
    pts.map((p, i) => {
      const q = pts[(i + 1) % pts.length];
      /* both halves of a span share one facet normal */
      const s = pts[i - (i % 2)], e = pts[(i - (i % 2) + 2) % pts.length];
      const v = shade((Math.atan2(s[0] - e[0], e[1] - s[1]) * 180) / Math.PI);
      return { p, q, front: q[0] < p[0], y: Math.max(p[1], q[1]), fill: `rgb(${v},${v},${v})` };
    }),
  )
  .filter((w) => w.front)
  .sort((a, b) => a.y - b.y);
const face = solids.map((pts) => 'M' + pts.map((p) => p.map((n) => n.toFixed(1)).join(' ')).join('L') + 'Z').join('');

const Model = () => (
  <g transform="translate(630 390) scale(.33333)" shapeRendering="crispEdges">
    {walls.map(({ p, q, fill }, i) => (
      <path key={i} d={`M${p[0]} ${p[1]}L${q[0]} ${q[1]}v${DEPTH}L${p[0]} ${p[1] + DEPTH}z`} fill={fill} stroke={fill} strokeWidth="1" />
    ))}
    <path d={face} fill="#fff" fillRule="evenodd" />
  </g>
);

const ViewCube = () => (
  <g fontFamily="Liberation Sans, Arial, sans-serif" fontWeight="700" textAnchor="middle" letterSpacing="0">
    <ellipse cx="1839" cy="294.500" rx="54.500" ry="51" fill="none" stroke="#454c56" strokeWidth="14" />
    <path d="M1817.500 245.500l50 7-6.500 45.500-1.500 17-47-7.500-2.500-17z" fill="#b9bbbb" />
    <path d="M1810 290.500l51 8-2 17-46.500-8z" fill="#a6a8a9" />
    <path d="M1810 290.500l51 8" stroke="#4f5459" strokeDasharray="6 2" />
    <path d="M1813 307.500l46 7.500" stroke="#2b3036" strokeDasharray="3 2" />
    <path d="M1824 255.500l33 5-3 27-33-4z" fill="#abb4ba" />
    <text transform="translate(1839 277) rotate(5) scale(.82 1)" fontSize="14.500" fill="#4a5056">TOP</text>
    <text transform="translate(1835.500 305.500) rotate(7) scale(1.150 .7)" fontSize="9.500" fill="#4c5156">FRONT</text>
    <g fontSize="17.500" fill="#babcbe">
      <text transform="translate(1847 248.500) rotate(6)">N</text>
      <text transform="translate(1783.500 289.500) rotate(6) skewX(-8)">W</text>
      <text transform="translate(1895.500 306.500) rotate(2)" fontSize="19">E</text>
      <text transform="translate(1829 354.500) rotate(4)" fontSize="20">S</text>
    </g>
    <rect x="1815" y="368.500" width="48" height="17.500" rx="3.500" fill="#888d9a" stroke="#a0a4af" />
    <text x="1831.500" y="380.500" fontSize="10.500" fontWeight="400" fill="#545b68">WCS</text>
    <path d="M1849.500 374.500h8l-4 4.500z" stroke="#a8adb8" fill="none" />
  </g>
);

const UcsIcon = () => (
  <g fontFamily="Inter, sans-serif" fontWeight="300" fontSize="17" textAnchor="middle">
    <path d="M52.500 857l5-43" stroke="#0a7a12" strokeWidth="6" />
    <path d="M53 850l4-36" stroke="#6cf46c" strokeWidth="2.200" />
    <path d="M50 858.500l48.500 7.500" stroke="#9c1b1e" strokeWidth="5.500" />
    <path d="M50 857.500l48.500 7.500" stroke="#ff4a4a" strokeWidth="2.500" />
    <path d="M50 861v-21" stroke="#06277a" strokeWidth="5.500" />
    <circle cx="50" cy="840.500" r="2.800" fill="#1f6dff" />
    <text x="61.500" y="810" fill="#2fae3b">Y</text>
    <text x="100" y="861.500" fill="#e0454a">X</text>
    <text x="54" y="836" fill="#1f86e8">Z</text>
  </g>
);

const nav = '#454a53';
const NavIcons = () => (
  <Ico s={32} h={213}>
    <g stroke={nav}>
      <circle cx="26" cy="5" r="3" strokeWidth="1.500" />
      <path d="M16 19.500h10.500V31a10.500 10.500 0 1 1-10.500-11.500z" />
      <circle cx="16" cy="30" r="6.500" /><circle cx="16" cy="30" r="4" />
      <path d="M1 58.500h30M1 165.500h30" stroke="#5a5e66" />
      <path d="M12 84l-7-9q0-2 2-1.500l4 4-2-11q2-2 3 0l2 8v-12q1.500-2 3 0l.5 12 3-11q2-1 2.500 1l-2 11 4-7q2-1 2 1l-4 10-3 5z" />
      <path d="M5 91l14 14M19 91L5 105" />
      <path d="M4 94v-4h4M16 90h4v4M4 102v4h4" strokeWidth="1.800" />
      <circle cx="20" cy="105" r="4.500" /><path d="M23.500 108.500l4 4" strokeWidth="2.500" />
      <path d="M14 148v-14h-2l4-6 4 6h-2v14zM8 145c-7-4 0-8 8-8 10 0 15 6 6 8q-6 1-14 0" />
      <path d="M4.500 170h5.500v6H4.500zM12.500 170H18v6h-5.500zM20.500 170H26v6h-5.500zM4.500 180h16v12h-16z" />
      <circle cx="26" cy="207" r="3" strokeWidth="1.500" />
    </g>
    <path d="M9 182.500l7 3.500-7 3.500zM10 142v5l-4-2.500zM14 50h5l-2.500 3zM14 120h5l-2.500 3zM14 158h5l-2.500 3z" fill={nav} />
  </Ico>
);

/* ---------- command line ---------- */
const CommandArea = styled.section`
  flex: none;
  height: 59px;
  display: flex;
  background: #2b313c;
`;
const CmdTools = styled.div`
  width: 24px;
  display: flex;
  flex-direction: column;
  align-items: center;
  border-right: 1px solid ${C.dark};
  padding-top: 4px;
`;
const CmdMain = styled.div`
  flex: 1;
  padding-left: 1px;
  background: ${C.dark};
  padding-top: 1px;
  color: #0c0c0c;
  font: 11.63px/15px 'DejaVu Sans Mono', monospace;
  letter-spacing: 0;
`;
const History = styled.div`
  height: 37px;
  padding: 6px 2px 0;
  background: #c8c8c8;
  white-space: pre;
`;
const Prompt = styled.div`
  display: flex;
  align-items: center;
  height: 20px;
  margin-top: 1px;
  padding-left: 4px;
  background: #fff;
  color: #6c6c6c;
  font-style: italic;
`;
const DarkCaret = styled(Caret)`
  background: #555;
  margin: 0 7px 0 2px;
`;

/* ---------- status bar ---------- */
const StatusBar = styled.footer`
  flex: none;
  display: flex;
  gap: 3px;
  height: 25px;
  padding: 0 0 2px 2px;
`;
const SGroup = styled.div<{ $w: number }>`
  flex: none;
  width: ${(p) => p.$w}px;
  display: flex;
  background: ${C.panel};
`;
const SItem = styled.div<{ $w: number; $on?: boolean }>`
  flex: none;
  width: ${(p) => p.$w}px;
  display: flex;
  align-items: center;
  justify-content: center;
  white-space: nowrap;
  background: ${(p) => (p.$on ? C.hot : 'transparent')};
`;
const w = '#f2f4f6';
const S = {
  grid: <Ico><path d="M4 0v16M8 0v16M12 0v16M0 4h16M0 8h16M0 12h16" stroke={w} strokeWidth="1.200" /></Ico>,
  dots: <Ico>{[3, 8, 13].flatMap((x) => [3, 8, 13].map((y) => dot(x, y, C.g)))}</Ico>,
  dyn: <Ico s={18}><path d="M4 2v8M0 6h8" stroke={w} strokeWidth="1.300" /><path d="M7 11h11v5H7z" fill={w} /><path d="M9 12v3" stroke="#456" /></Ico>,
  polar: <Ico><circle cx="7" cy="8.500" r="6" stroke={C.g} strokeWidth="1.300" /><path d="M7 8.500h9M7 8.500L13 1" stroke={C.g} strokeWidth="1.300" /></Ico>,
  iso: <Ico><path d="M7.500 0v16" stroke={C.green} /><path d="M1 2l13 12" stroke="#c96b72" strokeWidth="1.200" /><rect x="6" y="6.500" width="3" height="3" fill={w} /></Ico>,
  osnap: <Ico><path d="M2.500 5v10.500h13V2.500H6" stroke={w} strokeWidth="1.300" /><rect x=".5" y=".5" width="4.500" height="4.500" stroke={w} fill={C.hot} /></Ico>,
  osnap3: <Ico><path d="M2 5l3-4h10v9l-4 4H2zM2 5h9v9M11 5l4-4" stroke={C.g} strokeDasharray="3 1" />{[[2, 5], [11, 5], [2, 14], [11, 14]].map(([x, y]) => <rect key={`${x}${y}`} x={x - 1.500} y={y - 1.500} width="3" height="3" fill={C.b} />)}</Ico>,
  giz: <Ico><path d="M8 2l6 3.500v6L8 15l-6-3.500v-6zM8 9V2M8 9l-6 4M8 9l6 4" stroke={w} strokeWidth="1.200" /><path d="M6.500.500h3v3h-3zM0 12h3.500v3H0zM12.500 12H16v3h-3.500z" fill={C.hot} stroke={w} /></Ico>,
  anno: <Ico><path d="M8 0l2 6 3 7 2 3-5-3-2-3-2 3-5 3 2-3 3-7z" fill={C.g} /></Ico>,
  gear: <Ico><circle cx="8" cy="8" r="4" stroke={C.g} strokeWidth="3.500" /><circle cx="8" cy="8" r="6.700" stroke={C.g} strokeWidth="2.400" strokeDasharray="2.800 2.460" /></Ico>,
  plus: <Ico><path d="M8 0v16M0 8h16" stroke={C.g} strokeWidth="1.700" /></Ico>,
  list: <Ico><path d="M2.500.500h11v15h-11zM2.500 2.500h11" stroke={C.g} strokeWidth="1.300" /><path d="M4.500 5.500h2M8 5.500h4M4.500 8.500h2M8 8.500h4M4.500 11.500h2M8 11.500h4" stroke={C.g} strokeWidth="1.400" /></Ico>,
  trust: <Ico><path d="M3 0v12M0 3h12" stroke={C.g} /><path d="M5 2h5q4 0 4 4v5H5z" fill="#3f8ccf" /><path d="M0 9h6v5H0z" fill={C.y} /><path d="M6 11.500l3.500 3.500L16 8.500" stroke={C.green} strokeWidth="2.200" /></Ico>,
  perf: <Ico><path d="M0 1h15v10H0z" fill={C.g} /><path d="M0 8l4-5 3 5 3-5 5 5" stroke="#556" strokeWidth="1.200" /><path d="M12 6l5 9.500H7z" fill="#f09a5f" /><path d="M12 9v3.500M12 13.500v1" stroke="#fff" strokeWidth="1.200" /></Ico>,
  full: <Ico><path d="M.5 2.500h15v11H.5z" stroke={C.g} /><path d="M9.500 5h3.500v3.500zM3 7.500L6.500 11H3z" fill={C.g} /><path d="M12 6l-2.500 2M4 10l2.500-2" stroke={C.g} /></Ico>,
  menu: <Ico><path d="M0 2.500h16M0 8.500h16M0 14.500h16" stroke={C.g} strokeWidth="2" /></Ico>,
};

const MENUS: [string, number][] = [['File', 18], ['Edit', 20], ['View', 25], ['Insert', 29], ['Format', 39], ['Tools', 28], ['Draw', 27], ['Dimension', 57], ['Modify', 38], ['Window', 44], ['Help', 25], ['Express', 38], ['Parametric', 57]];
const TABS: [string, number][] = [['Solid', 26], ['Surface', 39], ['Mesh', 29], ['Visualize', 45], ['Parametric', 57], ['Insert', 29], ['Annotate', 49], ['View', 25], ['Manage', 43], ['Output', 38], ['Add-ins', 42], ['Collaborate', 61], ['Express Tools', 69], ['Featured Apps', 76]];

export default function App() {
  return (
    <App_>
      <Global />
      <TitleBar>
        <Quick $x={758}>
          <Badge><b>A</b><span>CAD</span></Badge>
          {I.fresh}<Gap $w={8} />{I.open}<Gap $w={8} />{I.save}<Gap $w={8} />{I.saveAs}<Gap $w={9} />{I.mobOpen}<Gap $w={7} />{I.mobSave}<Gap $w={8} />{I.print}
          <Gap $w={8} />{I.undo}<Caret $ml={7} /><Gap $w={8} />{I.redo}<Caret $ml={7} /><Gap $w={8} />{I.sheet}<Caret $s={8} $ml={8} /><Gap $w={8} />{I.plane}
          <Share>Share</Share>
        </Quick>
        <Label $w={142}>Autodesk AutoCAD 2023</Label>
        <Label $w={446}>naamee.dwg</Label>
        <Side />
        <Search>Type a keyword or phrase</Search>
        {I.search}<Gap $w={8} />{I.user}<Gap $w={5} />
        <Label $w={85}>Sign In</Label>
        <Caret /><Gap $w={13} />{I.cart}<Gap $w={9} />{I.tri}<Caret $ml={6} /><Gap $w={10} /><Rule /><Gap $w={9} />{I.help}<Caret $ml={6} />
        <Gap $w={70} />{I.min}<Gap $w={12} />{I.rest}<Gap $w={13} />{I.close}
      </TitleBar>
      <MenuBar>
        {MENUS.map(([t, n]) => <Label key={t} $w={n}>{t}</Label>)}
        <WinKeys>{I.min}{I.rest}{I.close}</WinKeys>
      </MenuBar>
      <RibbonTabs>
        <RTab $w={34} $on>Home</RTab>
        {TABS.map(([t, n]) => <RTab key={t} $w={n}>{t}</RTab>)}
        <Mini><i /></Mini>
        <TabCaret />
      </RibbonTabs>

      <Ribbon>
        <Panel w={187} x={62} title="Modeling" tw={50}>
          <Grid $cols="47px 55px 1fr">
            <Big w={47} icon={I.box} label="Box" drop />
            <Big w={55} icon={I.extrude} label="Extrude" drop />
            <Cmd $pad={8}>{I.polysolid}<Label>Polysolid</Label></Cmd>
            <Cmd $pad={8}>{I.presspull}<Label>Presspull</Label></Cmd>
          </Grid>
        </Panel>
        <Panel w={78} x={18} title="Mesh" tw={29} drop={false} launch={18}>
          <Grid $cols="55px 1fr">
            <Big w={52} icon={I.smooth} label={'Smooth\nObject'} />
            {I.meshMore}{I.meshLess}{I.meshRef}
          </Grid>
        </Panel>
        <Panel w={172} x={45} title="Solid Editing" tw={66}>
          <Grid $cols="28px 25px 1fr" $pad={7}>
            {I.union}{I.interfere}<Drop icon={I.xEdges} label="Extract Edges" w={69} ml={3} />
            {I.subtract}{I.slice}<Drop icon={I.xFaces} label="Extrude Faces" w={71} ml={3} />
            {I.intersect}{I.thicken}<Drop icon={I.separate} label="Separate" w={45} ml={3} />
          </Grid>
        </Panel>
        <Panel w={94} x={26} title="Draw" tw={27}>
          <Grid $cols="24px 28px 1fr" $pad={7}>
            {I.pline}{I.helix}<Drop icon={I.arc} />
            {I.spline}{I.line}<Drop icon={I.circle} />
            {I.polygon}{I.rect}<Drop icon={I.ellipse} />
          </Grid>
        </Panel>
        <Panel w={145} x={46} title="Modify" tw={38}>
          <Grid $cols="28px 24px 28px 24px 1fr" $pad={6}>
            {I.mirror3}{I.gizMove}{I.move}{I.copy}<Drop icon={I.trim} />
            {I.align3}{I.gizRot}{I.rotate}{I.stretch}<Drop icon={I.fillet} />
            {I.erase}{I.gizScale}{I.scale}{I.offset}<Drop icon={I.array} />
          </Grid>
        </Panel>
        <Panel w={76} x={5} title="Section" tw={38} launch={5}>
          <Big w={76} icon={I.section} label={'Section\nPlane'} />
        </Panel>
        <Panel w={145} x={34} title="Coordinates" tw={64} drop={false} launch={34}>
          <Grid $cols="39px 28px 24px 24px 1fr" $pad={7}>
            <Drop icon={I.ucsLight} ml={0} />{I.ucs1}{I.ucs2}{I.ucs3}{I.ucs4}
            <Drop icon={I.ucsRot} ml={0} />{I.ucs5}{I.ucs6}{I.ucs7}{I.ucs8}
            <Drop icon={I.ucsObj} ml={0} />
            <WideCell><Combo $w={100} $ml={-4}>{I.ucs4}<Label>World</Label><Caret $s={8} /></Combo></WideCell>
          </Grid>
        </Panel>
        <Panel w={205} x={83} title="View" tw={25}>
          <Stackd $pad={2}>
            <Combo $w={200}>{I.shaded}<Label>Shaded</Label><Caret $s={8} /></Combo>
            <Combo $w={200}>{I.unsaved}<Label>Unsaved View</Label><Caret $s={8} /></Combo>
            <Cmd $pad={4}>{I.single}<Label $w={81}>Single viewport</Label><Caret $ml={1} /></Cmd>
          </Stackd>
        </Panel>
        <Panel w={172} x={62} title="Selection" tw={49} drop={false}>
          <Gap $w={2} />
          <Big w={44} icon={I.culling} label="Culling" on />
          <Gap $w={4} />
          <Big w={60} icon={I.nofilter} label="No Filter" drop />
          <Gap $w={7} />
          <Big w={48} icon={I.gizmo} label={'Move\nGizmo'} />
          <GizCaret><Caret /></GizCaret>
        </Panel>
        <Panel w={273} x={113} title="Layers" tw={33}>
          <Big w={63} icon={I.layers} label={'Layer\nProperties'} />
          <Stackd>
            <Combo $w={207}>{I.bulb}{I.sun}{I.unlock}<Swatch /><Label>0</Label><Caret $s={8} /></Combo>
            <Grid $cols="24px 24px 24px 24px 1fr" $pad={3}>
              {I.la1}{I.la2}{I.la3}{I.la4}<Cmd>{I.la5}<Label>Make Current</Label></Cmd>
              {I.lb1}{I.lb2}{I.lb3}{I.lb4}<Cmd>{I.lb5}<Label>Match Layer</Label></Cmd>
            </Grid>
          </Stackd>
        </Panel>
        <Panel w={69} x={8} title="Groups" tw={38}>
          <Grid $cols="42px 24px">
            <Big w={42} icon={I.group} label="Group" />
            <Toggle>{I.ungroup}</Toggle><Toggle>{I.groupEdit}</Toggle><Toggle $on>{I.groupSel}</Toggle>
          </Grid>
        </Panel>
        <Panel w={302} x={5} title="View" tw={25} launch={5}>
          <Big w={62} icon={I.base} label="Base" drop />
        </Panel>
      </Ribbon>

      <DocTabs $h={27} $top={2} $x={8}>
        <Slash /><Gap $w={8} /><Label $w={32}>Start</Label>
        <OnTab $w={95} $pad={17}><Label $w={48}>naamee*</Label>{I.x9}</OnTab>
        <Gap $w={9} />{I.plus}<Gap $w={10} /><Slash />
      </DocTabs>
      <Strip $black />

      <Viewport>
        <Scene viewBox="0 200 1919 708">
          <path d="M908 200L783 908M1382 200L1740 253 1919 280" stroke="#363e4a" fill="none" />
          <path d="M402 200L279 908M1416 200L1291 908M1919 285L1798 908M0 459L630 555 1150 633 1919 747" stroke="#272e37" fill="none" />
          <Model />
          <g shapeRendering="crispEdges">
            <path d="M1183.500 442l-16 98" stroke="#85f285" />
            <path d="M1137 502.500l107 15" stroke="#f0868b" />
            <path d="M1172.500 480v41" stroke="#7a78d6" />
            <rect x="1169.500" y="504.500" width="6" height="6" fill="#212830" stroke="#fff" />
          </g>
          <UcsIcon />
          <ViewCube />
        </Scene>
        <ViewLabel>[−][Custom View][Shaded (Fast)]</ViewLabel>
        <NavBar><NavIcons /></NavBar>
      </Viewport>

      <Strip />
      <CommandArea>
        <CmdTools>
          <Ico s={17} h={6}><path d="M0 1h17M0 4.500h17" stroke={C.g} strokeWidth="2" strokeDasharray="2 1" /></Ico>
          <Svg $s={10} $h={28} viewBox="0 0 10 28"><path d="M1 9l8 8M9 9l-8 8" stroke={C.g} strokeWidth="1.900" /></Svg>
          <Ico><path d="M1.500 14.500L9 7" stroke={C.g} strokeWidth="3" /><path d="M8 8C7 4 9 1 13 1l-2.500 3 1.500 2 3-2c0 4-3 5.500-6 5z" fill={C.g} /></Ico>
        </CmdTools>
        <CmdMain>
          <History>{'Command:\nRight-click to display the shortcut menu. Press ESC or ENTER to exit.'}</History>
          <Prompt>
            <Ico s={16} h={12}><path d="M.5.500h15v11H.5z" stroke="#666" /><path d="M0 1.500h16" stroke="#666" strokeWidth="2" /><path d="M2.500 4.500l2 1.800-2 1.800M6 9h4" stroke="#555" /></Ico>
            <DarkCaret $s={8} />
            Type a command
          </Prompt>
        </CmdMain>
      </CommandArea>
      <Strip />

      <DocTabs $h={30} $top={0} $x={8}>
        <OnTab $w={69} $pad={17}><Label>Model</Label></OnTab>
        <Gap $w={7} /><Label $w={50}>Layout1</Label><Slash /><Gap $w={8} /><Label $w={50}>Layout2</Label><Slash />
        <Gap $w={10} />{I.plus}<Gap $w={10} /><Slash />
      </DocTabs>

      <StatusBar>
        <SGroup $w={1308} />
        <SGroup $w={48}><SItem $w={48}>MODEL</SItem></SGroup>
        <SGroup $w={63}><SItem $w={22} $on>{S.grid}</SItem><SItem $w={27}>{S.dots}</SItem><SItem $w={13}><Caret $s={8} /></SItem></SGroup>
        <SGroup $w={146}>
          <SItem $w={23} $on>{S.dyn}</SItem><SItem $w={26}>{S.polar}</SItem><SItem $w={16}><Caret $s={8} /></SItem>
          <SItem $w={25}>{S.iso}</SItem><SItem $w={16}><Caret $s={8} /></SItem>
          <SItem $w={23} $on>{S.osnap}</SItem><SItem $w={17}><Caret $s={8} /></SItem>
        </SGroup>
        <SGroup $w={80}><SItem $w={24}>{S.osnap3}</SItem><SItem $w={17}><Caret $s={8} /></SItem><SItem $w={22} $on>{S.giz}</SItem><SItem $w={17}><Caret $s={8} /></SItem></SGroup>
        <SGroup $w={58}><SItem $w={24}>{S.anno}</SItem><SItem $w={22}>1:1</SItem><SItem $w={9}><Caret $s={8} /></SItem></SGroup>
        <SGroup $w={65}><SItem $w={22}>{S.gear}</SItem><SItem $w={18}><Caret $s={8} /></SItem><SItem $w={25}>{S.plus}</SItem></SGroup>
        <SGroup $w={24}><SItem $w={24}>{S.list}</SItem></SGroup>
        <SGroup $w={49}><SItem $w={24}>{S.trust}</SItem><SItem $w={22}>{S.perf}</SItem></SGroup>
        <SGroup $w={48}><SItem $w={24}>{S.full}</SItem><SItem $w={24}>{S.menu}</SItem></SGroup>
      </StatusBar>
    </App_>
  );
}
